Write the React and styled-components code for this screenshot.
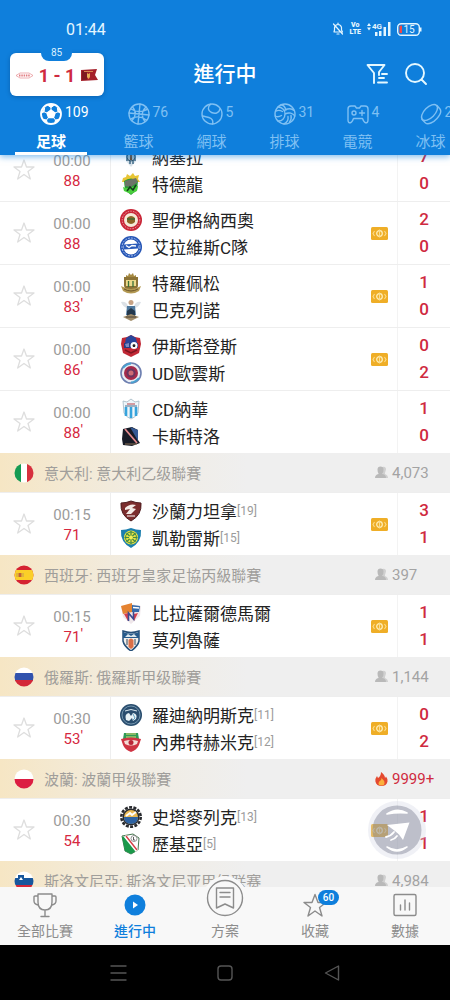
import React, { useLayoutEffect, useRef } from "react";
import styled, { createGlobalStyle } from "styled-components";

const BLUE = "#0f7fdc";
const RED = "#cf2a40";

const GlobalStyle = createGlobalStyle`
  * { box-sizing: border-box; }
  body {
    margin: 0;
    background: #fff;
    font-family: Roboto, "Noto Sans CJK TC", "Noto Sans CJK SC", sans-serif;
  }
  button {
    margin: 0; padding: 0; border: 0; background: none;
    color: inherit; font: inherit; cursor: pointer;
  }
  svg { display: block; flex: none; }
`;

const Screen = styled.div`
  display: flex;
  flex-direction: column;
  height: 100vh;
  overflow: hidden;
`;

/* ---------- header ---------- */
const Header = styled.header`
  position: relative;
  z-index: 2;
  flex: none;
  background: ${BLUE};
  box-shadow: 0 2px 6px rgba(15, 127, 220, 0.5);
`;

const StatusBar = styled.div`
  display: flex;
  align-items: center;
  justify-content: space-between;
  height: 50px;
  padding: 8px 28px 0 66px;
  color: #e4f6ff;
  font-size: 16px;
`;

const StatusIcons = styled.div`
  display: flex;
  align-items: center;
  gap: 6px;
`;

const Volte = styled.span`
  display: flex;
  flex-direction: column;
  align-items: center;
  font-size: 7px;
  line-height: 7px;
  font-weight: 900;
`;

const TitleRow = styled.div`
  display: grid;
  grid-template-columns: 1fr auto 1fr;
  align-items: center;
  height: 48px;
  padding: 0 22px 0 10px;
`;

const Title = styled.h1`
  margin: 0;
  color: #fff;
  font-size: 21px;
  line-height: 28px;
  font-weight: 500;
  padding-left: 12px;
`;

const ScoreCard = styled.button`
  position: relative;
  display: flex;
  align-items: center;
  justify-content: space-between;
  width: 94px;
  height: 43px;
  padding: 2px 6px 0;
  border-radius: 6px;
  background: #fff;
  box-shadow: 0 1px 4px rgba(0, 40, 90, 0.35);
  color: ${RED};
  font-size: 18px;
  font-weight: 700;
`;

const CardMinute = styled.span`
  position: absolute;
  top: -8px;
  left: 31px;
  width: 31px;
  height: 16px;
  border-radius: 0 0 8px 8px;
  background: ${BLUE};
  color: #d8efff;
  font-size: 10px;
  line-height: 16px;
  font-weight: 400;
  text-align: center;
`;

const Actions = styled.div`
  display: flex;
  justify-content: flex-end;
  gap: 15px;
`;

const Tabs = styled.nav`
  display: flex;
  height: 57px;
  overflow: hidden;
`;

const Tab = styled.button`
  position: relative;
  flex: none;
  display: flex;
  flex-direction: column;
  align-items: center;
  width: ${(p) => (p.$active ? 102 : 73)}px;
  padding-top: 5px;
  color: ${(p) => (p.$active ? "#fff" : "#7fc0f3")};
  font-size: 15px;
  line-height: 20px;
  font-weight: ${(p) => (p.$active ? 700 : 400)};
  gap: 7px;
  &::after {
    content: "";
    position: absolute;
    bottom: 0;
    width: 72px;
    height: 3px;
    background: ${(p) => (p.$active ? "#fff" : "transparent")};
  }
`;

const TabIcon = styled.span`
  position: relative;
  display: block;
`;

const TabCount = styled.span`
  position: absolute;
  left: 25px;
  top: 1px;
  font-size: 14px;
  line-height: 16px;
  font-weight: 400;
`;

/* ---------- match list ---------- */
const List = styled.main`
  flex: 1;
  min-height: 0;
  overflow-y: auto;
  scrollbar-width: none;
`;

const Match = styled.article`
  display: grid;
  grid-template-columns: 111px 1fr 52px;
  height: 63px;
  border-top: 1px solid #eeeeee;
`;

const Kickoff = styled.div`
  display: flex;
  align-items: center;
  border-right: 1px solid #eeeeee;
`;

const StarButton = styled.button`
  width: 48px;
  display: flex;
  justify-content: center;
`;

const Times = styled.div`
  width: 48px;
  display: flex;
  flex-direction: column;
  align-items: center;
  padding-top: 2px;
  font-size: 15px;
  line-height: 20px;
  color: #9b9b9b;
`;

const Minute = styled.span`
  position: relative;
  color: #d6293f;
  &::after {
    content: "${(p) => (p.$tick ? "'" : "")}";
    position: absolute;
    left: 100%;
    top: -3px;
  }
`;

const Body = styled.div`
  display: flex;
  align-items: center;
  justify-content: space-between;
  padding: 0 9px;
  border-right: 1px solid #f3f3f3;
`;

const Team = styled.div`
  display: flex;
  align-items: center;
  height: 27px;
  color: #222;
  font-size: 17px;
  white-space: nowrap;
`;

const TeamName = styled.span`
  margin-left: 10px;
`;

const Rank = styled.span`
  color: #9b9b9b;
  font-size: 12px;
`;

const Scores = styled.div`
  display: flex;
  flex-direction: column;
  align-items: center;
  justify-content: center;
  color: ${RED};
  font-size: 17px;
  line-height: 27px;
  font-weight: 500;
`;

const League = styled.header`
  display: flex;
  align-items: center;
  height: 39px;
  padding: 0 0 0 14px;
  background: linear-gradient(90deg, #f6e6c4 0, #f1ece2 30%, #efefef 55%);
  color: #a09e9b;
  font-size: 15px;
  white-space: nowrap;
`;

const LeagueName = styled.span`
  flex: 1;
  margin-left: 10px;
`;

const Viewers = styled.span`
  display: flex;
  align-items: center;
  gap: 4px;
  width: 75px;
  color: ${(p) => (p.$hot ? RED : "#a3a3a3")};
`;

/* ---------- bottom ---------- */
const Footer = styled.footer`
  position: relative;
  flex: none;
`;

const FloatButton = styled.button`
  position: absolute;
  right: 23px;
  top: -87px;
`;

const BottomNav = styled.nav`
  display: grid;
  grid-template-columns: repeat(5, 1fr);
  height: 58px;
  background: #f8f8f8;
`;

const NavItem = styled.button`
  display: flex;
  flex-direction: column;
  align-items: center;
  justify-content: flex-end;
  gap: 3px;
  padding-bottom: 4px;
  color: ${(p) => (p.$active ? BLUE : "#8c8c8c")};
  font-size: 14px;
  line-height: 20px;
  font-weight: ${(p) => (p.$active ? 500 : 400)};
`;

const NavIcon = styled.span`
  position: relative;
  display: block;
`;

const NavCircle = styled.span`
  display: grid;
  place-items: center;
  width: 44px;
  height: 44px;
  margin: -14px 0 -2px;
  border-radius: 50%;
  background: #f8f8f8;
`;

const NavBadge = styled.span`
  position: absolute;
  left: 16px;
  top: -2px;
  width: 21px;
  height: 15px;
  border-radius: 8px;
  background: ${BLUE};
  color: #fff;
  font-size: 10px;
  line-height: 15px;
  font-weight: 500;
  text-align: center;
`;

const SystemBar = styled.div`
  display: grid;
  grid-template-columns: repeat(3, 107px);
  justify-content: center;
  align-items: center;
  height: 55px;
  background: #000;
  color: #555;
`;

const SystemKey = styled.button`
  display: flex;
  justify-content: center;
`;

/* ---------- drawings ---------- */
const line = { fill: "none", stroke: "currentColor", strokeWidth: 1.4, strokeLinecap: "round", strokeLinejoin: "round" };

const sportIcons = {
  football: (
    <svg width="22" height="22" viewBox="0 0 22 22" {...line}>
      <circle cx="11" cy="11" r="10" strokeWidth="1.8" />
      <path d="M11 7l4 3-1.500 4.500h-5L7 10z" fill="currentColor" />
      <path d="M11 7V4.500M15 10l3-1.200M13.500 14.500l2 2.500M8.500 14.500l-2 2.500M7 10L4 8.800" strokeWidth="1" />
      <path d="M7.500 2L11 4.500 14.500 2zM1.800 10L4 8.800 4.600 5zM20.200 10L18 8.800 17.400 5zM3.800 16.500l2.700.5.800 3zM18.200 16.500l-2.700.5-.8 3z" fill="currentColor" strokeWidth="1" />
    </svg>
  ),
  basketball: (
    <svg width="22" height="22" viewBox="0 0 22 22" {...line}>
      <circle cx="11" cy="11" r="10" />
      <path d="M12 1L10 21M1 10l20 2M4.500 4c4 4 3.500 9.500-.5 13.500M18 4c-4.500 4-5 10-1 14.500M3 6c5 3 11 3 16 .5M2.500 16c5-3 11-2.500 16 1" />
    </svg>
  ),
  tennis: (
    <svg width="22" height="22" viewBox="0 0 22 22" {...line}>
      <circle cx="11" cy="11" r="10" />
      <path d="M9.500 1.200C6 4 7 8 10.500 9.500s7.500 1 8.500-3.500M1.500 13c3 1 6 .5 8.500 2.500s2 4 1.500 5.500" />
    </svg>
  ),
  volleyball: (
    <svg width="22" height="22" viewBox="0 0 22 22" {...line}>
      <circle cx="11" cy="11" r="10" />
      <path d="M11 11C11 7 8 4 4 4M11 11c4-2 8-1 9.800 2M11 11c0 4-3 7.500-7 7M12 7C11 4 9 2 7 1.800M11 7c4-2 7-1.500 9 .5M14 13.500c.5 3-1 6-4 7.400M17 12.500c.6 2.500 0 4.800-1.500 6.500M7.500 12.500C5 14 3 14 1.200 13M8.500 8.500C6 7 4 7 2 8" />
    </svg>
  ),
  esports: (
    <svg width="22" height="22" viewBox="0 0 22 22" {...line}>
      <path d="M4 3h4l1.500 2h3L14 3h4q3 0 3 3v11q0 3-2.500 2.800Q17 19.500 15.500 15.500h-9Q5 19.500 3.500 19.800 1 20 1 17V6q0-3 3-3z" />
      <circle cx="7" cy="10" r="2" />
      <path d="M12.500 10h5M15 7.500v5" />
    </svg>
  ),
  hockey: (
    <svg width="22" height="22" viewBox="0 0 22 22" {...line}>
      <ellipse cx="9.500" cy="9.500" rx="10" ry="5.200" transform="rotate(-45 9.500 9.500)" />
      <path d="M2 16.500L5.500 20c2.500 2 8-.5 11.500-4.500s4.500-7.500 3-9.500L17 2.500" />
    </svg>
  ),
};

const shield = "M1 3Q6 3 11 1q5 2 10 2 1 12-10 18Q0 15 1 3z";

const crests = {
  nasella: <><path d="M6 3h10v12l-5 6-5-6z" fill="#d9e3ea" /><path d="M7 6v9M10 5v13M13 5v13M15 6v9" stroke="#35627f" strokeWidth="1.400" /><circle cx="11" cy="11" r="4" fill="#9fb4bf" stroke="#35566b" /><path d="M11 8v6" stroke="#6b4a30" strokeWidth="2" /></>,
  trelew: <><path d="M3 5l3-1 1-3 3 2 3-3 2 3 4-1-1 4 2 3H2z" fill="#e7c534" /><path d="M4 8q7-5 14 0l-1 9-6 5-6-5z" fill="#289b36" /><path d="M5 8l11-3 2 4-7 5-6-1z" fill="#6c7468" /><path d="M3 14q4 2 8 0l7-1-1 5-6 3-7-3z" fill="#49cf3d" /><path d="M7 18l3-4 3 3 3-5" stroke="#153b1c" strokeWidth="1.500" fill="none" /></>,
  ignacio: <><circle cx="11" cy="11" r="11" fill="#c92637" /><circle cx="11" cy="11" r="8.800" fill="none" stroke="#f0b5ba" strokeWidth=".8" strokeDasharray="1.500 1.200" /><circle cx="11" cy="11" r="7" fill="#f4ead8" /><path d="M7 9q4-4 8 0v4q-4 4-8 0z" fill="#8d6426" /><path d="M7 10h8" stroke="#3f6b34" strokeWidth="1.500" /></>,
  alaves: <><circle cx="11" cy="11" r="11" fill="#2555b5" /><circle cx="11" cy="11" r="9" fill="none" stroke="#a9c2f0" strokeWidth="1" strokeDasharray="2 1" /><circle cx="11" cy="11" r="7.500" fill="#fff" /><path d="M4 8.500l14-1v5l-14 1z" fill="#2a5bb9" /><path d="M6 9.500l3 2 3-2 4 .5" stroke="#fff" strokeWidth="1.400" fill="none" /></>,
  trofense: <><path d="M6 3l2 1 1-3 2 2 2-2 1 3 2-1v4H6z" fill="#a68a42" /><path d="M4 5h14v9q-1 4-7 6-6-2-7-6z" fill="#8c7336" /><path d="M6 8h10v6H6z" fill="#ecd98a" /><path d="M8.500 9v6M13 9v6" stroke="#397039" strokeWidth="1.300" /><path d="M1 14q10 6 20 0l-2 5q-8 5-16 0z" fill="#b39953" /><path d="M4 17q7 4 14 0" stroke="#6b552a" fill="none" /></>,
  barcelos: <><path d="M1 3q5-1 7 4h6q2-5 7-4-2 5-6 6H7Q3 8 1 3z" fill="#dce1e6" /><circle cx="11" cy="3.500" r="2.500" fill="#c6a284" /><path d="M7 7h8l1 9H6z" fill="#4e789d" /><path d="M7 12l4-3 4 3v8H7z" fill="#24384d" /><path d="M3 18l8-3 8 3-8 4z" fill="#a08b68" /><path d="M6 18h10" stroke="#4a4034" /></>,
  estarreja: <><path d="M2 3l5-1 4-2 4 2 5 1 1 6-2 9-8 4-8-4-2-9z" fill="#c02835" /><path d="M6 3l5-3 5 3 1 5H5z" fill="#29469b" /><path d="M4 8h14v5H4z" fill="#273d82" /><path d="M5 9l4-1v4H6z" fill="#7a8bc4" /><circle cx="14" cy="10.500" r="3.500" fill="#fff" /><path d="M12.500 10l1.500-1 1.500 1-.5 2h-2z" fill="#222" /><path d="M5 15l6 3 6-3" stroke="#7d1722" strokeWidth="1.500" fill="none" /></>,
  oliveirense: <><circle cx="11" cy="11" r="10" fill="#e8edf4" stroke="#6d7fb0" strokeWidth="1.600" /><path d="M3 6q3-4 8-4.500M19 16q-3 4-8 4.500" stroke="#4aa0cf" strokeWidth="2" fill="none" /><circle cx="11" cy="11" r="7" fill="#a62a4a" /><circle cx="11" cy="11" r="4.500" fill="#6b3560" /><circle cx="11" cy="11" r="2.500" fill="#cf6b74" /></>,
  nava: <><path d="M3 3l4 1 4-3 4 3 4-1-1 12q-2 4-7 6-5-2-7-6z" fill="#eef6fa" stroke="#a2b8c4" strokeWidth=".8" /><path d="M6 9v9M11 9v11M16 9v9" stroke="#36a3dc" strokeWidth="2.600" /><path d="M5 8h12" stroke="#466b8b" /><path d="M7 6h8" stroke="#d39aa0" strokeWidth="2" /></>,
  castro: <><path d="M3 4l9-2 6 3v10l2 3-8 3-9-1-1-6z" fill="#171b26" /><path d="M10 2l8 3v11z" fill="#355a95" /><path d="M5 4l12 14" stroke="#e48a8f" strokeWidth="1.800" /><path d="M5 19h12" stroke="#8a7152" /></>,
  salernitana: <><path d={shield} fill="#7b2d2d" stroke="#4e1e20" /><path d="M5 8q5-5 11-3l-4 3 4 1-5 5H6l4-5-5 1z" fill="#f4ece7" /><path d="M7 16h8" stroke="#fff" /></>,
  carrarese: <><path d={shield} fill="#1c7fae" /><circle cx="11" cy="10.500" r="7" fill="#e8e240" /><circle cx="11" cy="10.500" r="5.500" fill="none" stroke="#41884b" /><path d="M11 4v13M4.500 10.500h13M6.500 6l9 9M15.500 6l-9 9" stroke="#418a49" strokeWidth="1.200" /><circle cx="11" cy="10.500" r="2" fill="#f3f058" /></>,
  birlad: <><path d="M1 4l10-2 10 2-1 10-9 8-8-7z" fill="#efe7ea" /><path d="M1 4l11-3v9l-9 2z" fill="#e58331" /><path d="M12 3l8 1-1 6h-7z" fill="#356aa9" /><path d="M13 5.500l6 .5" stroke="#fff" strokeWidth="1.500" /><path d="M4 12l4-1v8zM18 11l-4 1v7z" fill="#d73f4d" /><path d="M8.500 19v-8l5 6v-7" stroke="#3a4a90" strokeWidth="1.600" fill="none" /></>,
  morales: <><path d="M3 2q8 3 16 0v10q-1 5-8 10-7-5-8-10z" fill="#f2efec" stroke="#254f79" strokeWidth="1.500" /><path d="M3 3q8 3 16 0v6H3z" fill="#265a8b" /><path d="M5 8l3-3 3 2 3-2 3 3" fill="#dce7ed" /><path d="M7 10v6M15 10v6" stroke="#345" /><path d="M8.500 11q2.500-3 5 0v7L11 20l-2.500-2z" fill="#dc7048" /></>,
  rodina: <><circle cx="11" cy="11" r="11" fill="#294d6e" /><circle cx="11" cy="11" r="9" fill="none" stroke="#87a8bf" strokeWidth=".8" /><path d="M5 7q6-3 12 0" stroke="#d9e7ef" fill="none" /><path d="M6 16q-2-6 3-7l2 3 2-3q5 1 3 6l-3 2-1-3-3 3z" fill="#e8f2f6" /><path d="M13 10l2 4-2 2" stroke="#5c9fc1" fill="none" /></>,
  neftekhimik: <><path d="M4 2h14l1 6H3z" fill="#2d9a56" /><path d="M6 3h10M6 6h10" stroke="#e6d577" strokeWidth="1.200" /><path d="M1 8q10-3 20 0l-2 6q-2 5-8 7-6-2-8-7z" fill="#cf3443" /><path d="M4 10q7-2 14 0l-1 3q-6 3-12 0z" fill="#f3dcd6" /><circle cx="11" cy="11.500" r="2.500" fill="#ba2637" /></>,
  stal: <><circle cx="11" cy="11" r="9.700" fill="none" stroke="#292b2f" strokeWidth="2.600" strokeDasharray="3 1.350" /><circle cx="11" cy="11" r="8.500" fill="#292b2f" /><circle cx="11" cy="11" r="7" fill="#e9b954" /><path d="M4 11h14q0 7-7 7t-7-7z" fill="#2d62a2" /><path d="M6 10l4-3 2 2 4-3" stroke="#fff" strokeWidth="2" fill="none" /></>,
  legia: <><path d="M2 3l11-2 6 4-1 12-7 4-6-3z" fill="#fff" stroke="#477650" /><path d="M2 4l4-1 10 15-5 3-6-3z" fill="#1a984a" /><path d="M5 3l12 15" stroke="#fff" strokeWidth="3" /><path d="M6 3l11 14" stroke="#d53d45" strokeWidth="1.400" /><circle cx="14" cy="5.500" r="3" fill="#fff" stroke="#777" strokeWidth=".8" /><path d="M13.500 4v3h1.500" stroke="#333" fill="none" strokeWidth=".8" /></>,
};

const Crest = ({ id }) => (
  <svg width="22" height="22" viewBox="0 0 22 22" aria-hidden="true">{crests[id]}</svg>
);

const flags = {
  it: <><path d="M0 0h7v20H0z" fill="#159b53" /><path d="M7 0h6v20H7z" fill="#fff" /><path d="M13 0h7v20h-7z" fill="#d7303e" /></>,
  es: <><path d="M0 0h20v20H0z" fill="#d52331" /><path d="M0 5h20v10H0z" fill="#fbcf28" /><path d="M4.500 8h3v4h-3z" fill="#c0623a" /><path d="M3 8v4M9 8v4" stroke="#c39a52" /></>,
  ru: <><path d="M0 0h20v7H0z" fill="#fff" /><path d="M0 6h20v8H0z" fill="#3152ad" /><path d="M0 13h20v7H0z" fill="#d32738" /></>,
  pl: <><path d="M0 0h20v10H0z" fill="#fff" /><path d="M0 10h20v10H0z" fill="#dc1d42" /></>,
  si: <><path d="M0 0h20v7H0z" fill="#fff" /><path d="M0 7h20v7H0z" fill="#17579d" /><path d="M0 14h20v6H0z" fill="#d32738" /><path d="M4 4h6v5q-1 3-3 4-2-1-3-4z" fill="#17579d" /><path d="M5 9l2-3 2 3z" fill="#fff" /></>,
};

const Flag = ({ code }) => (
  <svg width="20" height="20" viewBox="0 0 20 20" aria-hidden="true">
    <clipPath id={`flag-${code}`}><circle cx="10" cy="10" r="9.500" /></clipPath>
    <g clipPath={`url(#flag-${code})`}>{flags[code]}</g>
  </svg>
);

const Star = () => (
  <svg width="24" height="24" viewBox="0 0 24 24" fill="none" stroke="#dedede" strokeWidth="1.300" strokeLinejoin="round">
    <path d="M12 2l2.500 7H22l-6 4.500 2.300 7.500L12 16.500 5.700 21 8 13.500 2 9h7.500z" />
  </svg>
);

const Ticket = () => (
  <svg width="17" height="13" viewBox="0 0 17 13">
    <rect width="17" height="13" rx="1.500" fill="#efae27" />
    <circle cx="8.500" cy="6.500" r="2.800" fill="none" stroke="#fff0bd" strokeWidth="1.200" />
    <path d="M8.500 2.500v8M3.500 4L2 6.500 3.500 9M13.500 4L15 6.500 13.500 9" fill="none" stroke="#fbdc8c" strokeWidth="1.100" />
  </svg>
);

const Person = () => (
  <svg width="13" height="13" viewBox="0 0 13 13">
    <path d="M7 1q4-1 4 2.500L10 7v1q3 1 3 4H8z" fill="#d0d0d0" />
    <path d="M2.500 3.500Q2.500.5 5.500.5t3 3-1 4V8q3.500.8 3.500 4H0q0-3.200 3.500-4v-.5q-1-1-1-4z" fill="#b9b9b9" />
  </svg>
);

const Flame = () => (
  <svg width="13" height="14" viewBox="0 0 13 14">
    <path d="M6 0q4 3 4 6l1-1.500Q13 7 12.500 9.500 11.500 14 6.500 14T.4 9.500Q0 6.500 2 4l1 2Q6 4 6 0z" fill="#e4492f" />
    <path d="M6.500 6q3 2.500 3 5t-3 2.500-3-2.200Q4 9 5 9q1.500-1 1.500-3z" fill="#fbb03c" />
  </svg>
);

const sports = [
  ["football", "足球", "109"],
  ["basketball", "籃球", "76"],
  ["tennis", "網球", "5"],
  ["volleyball", "排球", "31"],
  ["esports", "電競", "4"],
  ["hockey", "冰球", "2"],
];

const sections = [
  {
    matches: [
      { time: "00:00", min: "88", odds: false, teams: [["nasella", "納塞拉", "7"], ["trelew", "特德龍", "0"]] },
      { time: "00:00", min: "88", odds: true, teams: [["ignacio", "聖伊格納西奧", "2"], ["alaves", "艾拉維斯C隊", "0"]] },
      { time: "00:00", min: "83", tick: true, odds: true, teams: [["trofense", "特羅佩松", "1"], ["barcelos", "巴克列諾", "0"]] },
      { time: "00:00", min: "86", tick: true, odds: true, teams: [["estarreja", "伊斯塔登斯", "0"], ["oliveirense", "UD歐雲斯", "2"]] },
      { time: "00:00", min: "88", tick: true, odds: false, teams: [["nava", "CD納華", "1"], ["castro", "卡斯特洛", "0"]] },
    ],
  },
  {
    flag: "it", name: "意大利: 意大利乙级聯賽", viewers: "4,073",
    matches: [{ time: "00:15", min: "71", odds: true, teams: [["salernitana", "沙蘭力坦拿", "3", "[19]"], ["carrarese", "凱勒雷斯", "1", "[15]"]] }],
  },
  {
    flag: "es", name: "西班牙: 西班牙皇家足協丙級聯賽", viewers: "397",
    matches: [{ time: "00:15", min: "71", tick: true, odds: true, teams: [["birlad", "比拉薩爾德馬爾", "1"], ["morales", "莫列魯薩", "1"]] }],
  },
  {
    flag: "ru", name: "俄羅斯: 俄羅斯甲级聯賽", viewers: "1,144",
    matches: [{ time: "00:30", min: "53", tick: true, odds: true, teams: [["rodina", "羅迪納明斯克", "0", "[11]"], ["neftekhimik", "內弗特赫米克", "2", "[12]"]] }],
  },
  {
    flag: "pl", name: "波蘭: 波蘭甲级聯賽", viewers: "9999+", hot: true,
    matches: [{ time: "00:30", min: "54", odds: true, teams: [["stal", "史塔麥列克", "1", "[13]"], ["legia", "歷基亞", "1", "[5]"]] }],
  },
  { flag: "si", name: "斯洛文尼亞: 斯洛文尼亚甲级联赛", viewers: "4,984", matches: [] },
];

const MatchRow = ({ match }) => (
  <Match>
    <Kickoff>
      <StarButton aria-label="收藏"><Star /></StarButton>
      <Times>
        <span>{match.time}</span>
        <Minute $tick={match.tick}>{match.min}</Minute>
      </Times>
    </Kickoff>
    <Body>
      <div>
        {match.teams.map(([crest, name, , rank]) => (
          <Team key={name}>
            <Crest id={crest} />
            <TeamName>{name}</TeamName>
            {rank && <Rank>{rank}</Rank>}
          </Team>
        ))}
      </div>
      {match.odds && <Ticket />}
    </Body>
    <Scores>
      {match.teams.map(([, name, score]) => <span key={name}>{score}</span>)}
    </Scores>
  </Match>
);

const FIRST_VISIBLE_OFFSET = 17;

export default function App() {
  const listRef = useRef(null);
  useLayoutEffect(() => {
    listRef.current.scrollTop = FIRST_VISIBLE_OFFSET;
  }, []);

  return (
    <Screen>
      <GlobalStyle />
      <Header>
        <StatusBar>
          <span>01:44</span>
          <StatusIcons>
            <svg width="12" height="14" viewBox="0 0 12 14" {...line} strokeWidth="1.200">
              <path d="M2 10h8.500L9.500 8V5.500Q9 2.500 6 2.500q-3 0-3.500 3V8zM5 12h2M6 1v1M1.500 2l9 10" />
            </svg>
            <Volte><span>Vo</span><span>LTE</span></Volte>
            <svg width="24" height="14" viewBox="0 0 24 14" fill="currentColor">
              <path d="M0 4l2-3 2 3zM0 5.500l2 3 2-3z" />
              <text x="5" y="7" fontSize="8" fontWeight="700">4G</text>
              <path d="M8 10h2.500v4H8zM12 9h2.500v5H12zM16.500 5H19v9h-2.500zM21 0h2.500v14H21z" />
            </svg>
            <svg width="25" height="13" viewBox="0 0 25 13">
              <rect x=".7" y=".7" width="21.600" height="11.600" rx="3.500" fill="none" stroke="currentColor" strokeWidth="1.400" />
              <path d="M2.500 3v7h2.500V2.500z" fill="#f04848" />
              <path d="M23 4.500h1.500v4H23z" fill="currentColor" />
              <text x="12" y="10" fontSize="10" textAnchor="middle" fill="currentColor">15</text>
            </svg>
          </StatusIcons>
        </StatusBar>
        <TitleRow>
          <ScoreCard>
            <CardMinute>85</CardMinute>
            <svg width="17" height="7" viewBox="0 0 17 7" fill="none" stroke="#e27b80" strokeWidth="1">
              <path d="M0 3.500L4 1h9l4 2.500L13 6H4z" strokeWidth=".6" /><path d="M3 3.500h11" strokeWidth="2" strokeDasharray="1.500 .8" />
            </svg>
            <span>1 - 1</span>
            <svg width="17" height="12" viewBox="0 0 17 12">
              <path d="M0 1l16-1-2 6 3 5-17 1z" fill="#a5212b" /><path d="M1 2l5-.3v9L1 11z" fill="#7e1820" /><path d="M6 4l1.500 1L9 4v4l-1.500 2L6 8z" fill="#e6ae56" /><path d="M3 2.500h9" stroke="#d78651" />
            </svg>
          </ScoreCard>
          <Title>進行中</Title>
          <Actions>
            <button aria-label="篩選">
              <svg width="24" height="24" viewBox="0 0 24 24" {...line} stroke="#e4f8ff" strokeWidth="1.900">
                <path d="M9 21V11L2.500 3h17L14 10v3M14 16h5M17 12h5M13 20.500h9" />
              </svg>
            </button>
            <button aria-label="搜尋">
              <svg width="24" height="24" viewBox="0 0 24 24" {...line} stroke="#e4f8ff" strokeWidth="1.900">
                <circle cx="11" cy="11" r="9" /><path d="M17.500 17.500L22 22" />
              </svg>
            </button>
          </Actions>
        </TitleRow>
        <Tabs>
          {sports.map(([id, label, count], i) => (
            <Tab key={id} $active={i === 0}>
              <TabIcon>{sportIcons[id]}<TabCount>{count}</TabCount></TabIcon>
              <span>{label}</span>
            </Tab>
          ))}
        </Tabs>
      </Header>

      <List ref={listRef}>
        {sections.map((s, i) => (
          <section key={i}>
            {s.name && (
              <League>
                <Flag code={s.flag} />
                <LeagueName>{s.name}</LeagueName>
                <Viewers $hot={s.hot}>{s.hot ? <Flame /> : <Person />}{s.viewers}</Viewers>
              </League>
            )}
            {s.matches.map((m) => <MatchRow key={m.teams[0][1]} match={m} />)}
          </section>
        ))}
      </List>

      <Footer>
        <FloatButton aria-label="快速導航">
          <svg width="60" height="60" viewBox="0 0 60 60">
            <circle cx="30" cy="30" r="29" fill="#d5d8e6" opacity=".35" />
            <circle cx="30" cy="30" r="24.500" fill="#70758a" opacity=".4" />
            <g fill="#fff">
              <path d="M20 25l22.500-2.500L36 40l-4-5.500-4-3.500z" />
              <path d="M20 14q10-7 20-1-10-1-20 1zM20 47q10 6 20 0-10 8-20 0z" stroke="#fff" strokeWidth="1.600" strokeLinejoin="round" />
              <path d="M19 37q5-1 8-5M24 40q4-1 6-4" fill="none" stroke="#fff" strokeWidth="1.800" strokeLinecap="round" />
            </g>
          </svg>
        </FloatButton>
        <BottomNav>
          <NavItem>
            <svg width="26" height="26" viewBox="0 0 26 26" {...line}>
              <path d="M6 2h14v8q0 8-7 8t-7-8zM6 4H3q-1 0-1 1v4q0 3 4 4M20 4h3q1 0 1 1v4q0 3-4 4M13 18v6M9 24.500h8" />
            </svg>
            全部比賽
          </NavItem>
          <NavItem $active>
            <svg width="26" height="26" viewBox="0 0 26 26">
              <circle cx="13" cy="13" r="10.500" fill={BLUE} /><path d="M11 9.500l5 3.500-5 3.500z" fill="#fff" />
            </svg>
            進行中
          </NavItem>
          <NavItem>
            <NavCircle>
              <svg width="38" height="38" viewBox="0 0 38 38" {...line}>
                <circle cx="19" cy="19" r="17.500" />
                <path d="M10.500 9h17v20L19 25l-8.500 4zM14 13.500h10M14 18h10" />
              </svg>
            </NavCircle>
            方案
          </NavItem>
          <NavItem>
            <NavIcon>
              <svg width="26" height="26" viewBox="0 0 26 26" {...line}>
                <path d="M13 2.500l3 8h8l-6.500 5L20 24l-7-5-7 5 2.500-8.500L2 10.500h8z" />
              </svg>
              <NavBadge>60</NavBadge>
            </NavIcon>
            收藏
          </NavItem>
          <NavItem>
            <svg width="26" height="26" viewBox="0 0 26 26" {...line}>
              <rect x="2" y="2.500" width="22" height="21" rx="1.500" /><path d="M8.500 13v5M13 8v10M17.500 11v7" />
            </svg>
            數據
          </NavItem>
        </BottomNav>
        <SystemBar>
          <SystemKey aria-label="最近">
            <svg width="18" height="18" viewBox="0 0 18 18" {...line}><path d="M2 2h15M2 9h15M2 16h15" /></svg>
          </SystemKey>
          <SystemKey aria-label="主畫面">
            <svg width="16" height="16" viewBox="0 0 16 16" {...line}><rect x="1" y="1" width="14" height="14" rx="3" /></svg>
          </SystemKey>
          <SystemKey aria-label="返回">
            <svg width="16" height="16" viewBox="0 0 16 16" {...line}><path d="M14.500 1v14L1.500 8z" /></svg>
          </SystemKey>
        </SystemBar>
      </Footer>
    </Screen>
  );
}
